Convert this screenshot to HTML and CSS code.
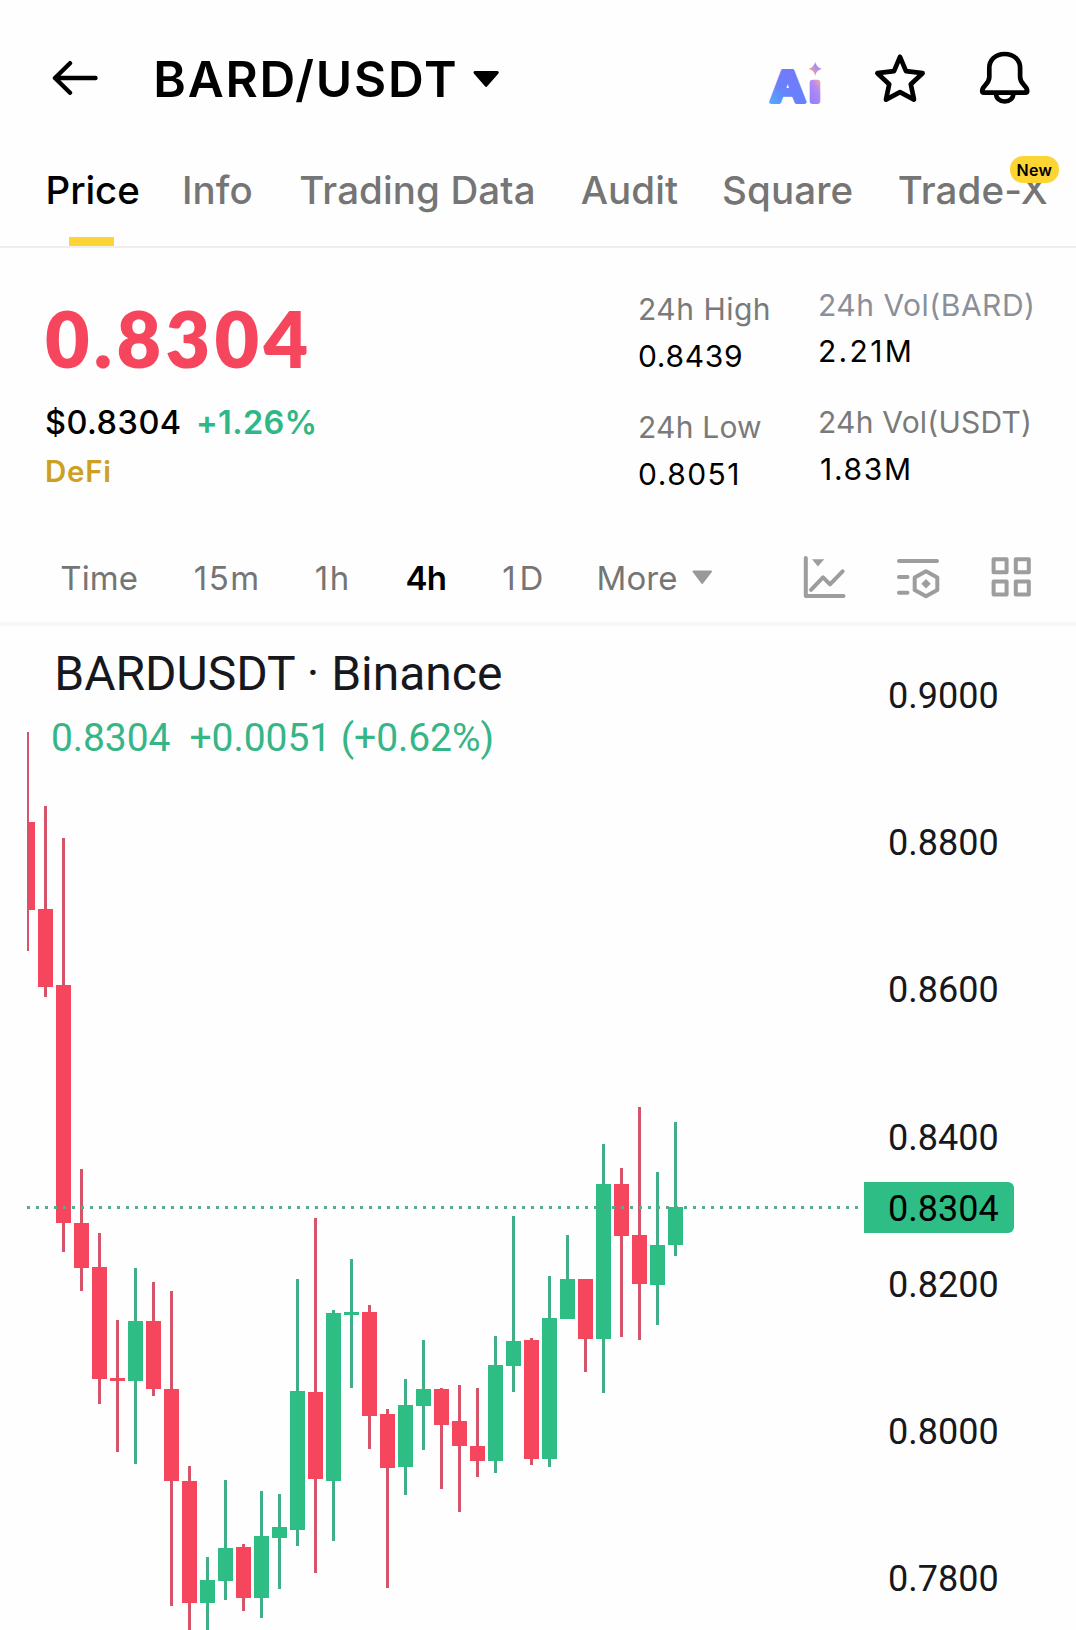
FILE: index.html
```html
<!DOCTYPE html>
<html lang="en">
<head>
<meta charset="utf-8">
<title>BARD/USDT</title>
<link rel="stylesheet" href="styles.css">
</head>
<body>
<header class="header">
  <svg class="back" width="46" height="44" viewBox="52 57 46 44"><path d="M95.500 78H55M70 63.200L55 78L70 92.800"/></svg>
  <h1 class="pair">BARD/USDT</h1>
  <svg class="caret" width="28" height="18" viewBox="472 69 28 18"><path d="M475 71.500H497.300L486.100 84.300Z"/></svg>
  <div class="actions">
    <svg class="assistant" width="56" height="50" viewBox="768 54 56 50">
      <defs>
        <linearGradient id="ga" gradientUnits="userSpaceOnUse" x1="768" y1="104" x2="796" y2="76"><stop offset="0" stop-color="#4fb0ff"/><stop offset=".5" stop-color="#6583fb"/><stop offset="1" stop-color="#7379fb"/></linearGradient>
        <linearGradient id="gi" x1="0" y1="1" x2=".7" y2="0"><stop offset="0" stop-color="#8f7dfb"/><stop offset=".75" stop-color="#b48bf3"/><stop offset="1" stop-color="#e0a0b8"/></linearGradient>
        <linearGradient id="gs" x1="0" y1="1" x2="1" y2="0"><stop offset=".2" stop-color="#f0a58c"/><stop offset=".6" stop-color="#b08bee"/></linearGradient>
      </defs>
      <text class="ai" x="770" y="102" textLength="35.500" lengthAdjust="spacingAndGlyphs">A</text>
      <rect x="809.700" y="79.700" width="10.600" height="24.300" rx="3" fill="url(#gi)"/>
      <path d="M815.200 62Q816.500 67.500 822 68.800Q816.500 70 815.200 75.700Q813.900 70 808.400 68.800Q813.900 67.500 815.200 62Z" fill="url(#gs)"/>
    </svg>
    <svg class="line" width="52" height="52" viewBox="874 53 52 52"><path d="M900 56.800L906 71.200L922.600 73.200L910.800 84.200L914 99.600L900 92.200L886 99.600L889.200 84.200L877.400 73.200L894 71.200Z"/></svg>
    <svg class="line" width="52" height="58" viewBox="979 50 52 58"><path d="M1004.700 54C995 54 989.300 60.500 989.300 68V77C989.300 84.500 982.200 85.500 982.200 91Q982.200 92.700 984 92.700H1025.400Q1027.200 92.700 1027.200 91C1027.200 85.500 1020.100 84.500 1020.100 77V68C1020.100 60.500 1014.400 54 1004.700 54ZM996 93C996 98.500 1000 101.500 1004.700 101.500S1013.400 98.500 1013.400 93"/></svg>
  </div>
</header>

<nav class="tabs">
  <a class="tab active">Price</a>
  <a class="tab">Info</a>
  <a class="tab">Trading Data</a>
  <a class="tab">Audit</a>
  <a class="tab">Square</a>
  <a class="tab">Trade-X<span class="badge">New</span></a>
</nav>

<section class="ticker">
  <div class="quote">
    <div class="last">0.8304</div>
    <div class="sub"><span class="fiat">$0.8304</span><span class="change">+1.26%</span></div>
    <div class="tag">DeFi</div>
  </div>
  <dl class="stats">
    <div><dt>24h High</dt><dd class="high">0.8439</dd></div>
    <div><dt class="snug">24h Low</dt><dd class="low">0.8051</dd></div>
  </dl>
  <dl class="stats volume">
    <div><dt class="cool">24h Vol(BARD)</dt><dd class="base">2.21M</dd></div>
    <div><dt class="snug">24h Vol(USDT)</dt><dd class="counter">1.83M</dd></div>
  </dl>
</section>

<nav class="intervals">
  <div class="ranges">
    <span>Time</span><span class="fig">15m</span><span class="fig">1h</span><span class="on">4h</span><span class="fig day">1D</span><span>More</span>
    <svg width="22" height="16" viewBox="691 570 22 16"><path d="M693.500 571.500H711L702.200 583Z"/></svg>
  </div>
  <div class="tools">
    <svg width="44" height="48" viewBox="803 554 44 48"><path d="M805.800 558V596H843.500M811 589.800L823 577.300L830 584.300L842.600 571.300"/><path class="solid" d="M812 559.300H824.200L818 566.500Z"/></svg>
    <svg width="44" height="48" viewBox="896 554 44 48"><path d="M899 561H937M899 577H907.500M899 592.700H907.500M926 571.300L937.300 577.500V590L926 596.200L914.700 590V577.500Z"/><path class="solid" d="M926 579L930.700 583.700L926 588.400L921.300 583.700Z"/></svg>
    <svg width="42" height="48" viewBox="990 554 42 48"><path d="M993.600 559.300h13v13h-13zM1015.800 559.300h13v13h-13zM993.600 581.500h13v13h-13zM1015.800 581.500h13v13h-13z"/></svg>
  </div>
</nav>

<main class="chart">
  <div class="plot">
    <svg id="candles" width="864" height="1004" viewBox="0 626 864 1004" shape-rendering="crispEdges"></svg>
    <div class="legend">
      <div class="symbol">BARDUSDT · Binance</div>
      <div class="delta"><span>0.8304</span><span>+0.0051 (+0.62%)</span></div>
    </div>
  </div>
  <div class="scale">
    <span>0.9000</span><span>0.8800</span><span>0.8600</span><span>0.8400</span><span>0.8200</span><span>0.8000</span><span>0.7800</span>
    <b class="current">0.8304</b>
  </div>
</main>
<script src="chart.js"></script>
</body>
</html>
```
FILE: styles.css
```css
* { box-sizing: border-box; }
body { margin: 0; width: 1076px; height: 1630px; overflow: hidden; background: #fefefe; color: #000; font-family: Inter, "Liberation Sans", sans-serif; white-space: nowrap; }
svg { display: block; flex: none; }

.header { display: flex; align-items: center; height: 158px; padding: 0 45px 0 52px; }
.back { fill: none; stroke: #000; stroke-width: 4.4; stroke-linecap: round; stroke-linejoin: round; }
.pair { margin: 0 0 0 55.3px; font-size: 49.5px; font-weight: 600; letter-spacing: 1.79px; line-height: 60px; }
.caret { margin-left: 13.6px; stroke: #000; stroke-width: 3; stroke-linejoin: round; }
.actions { display: flex; align-items: center; margin-left: auto; }
.actions svg + svg { margin-left: 50px; }
.actions svg:last-child { margin-left: 53px; }
.line { fill: none; stroke: #000; stroke-width: 4.7; stroke-linejoin: round; stroke-linecap: round; }
.assistant { overflow: visible; }
.ai { font-size: 42px; font-weight: 700; fill: url(#ga); stroke: url(#ga); stroke-width: 3.8; stroke-linejoin: round; }

.tabs { display: grid; grid-template-columns: 136.3px 117.4px 281.4px 141.4px 175.7px auto; align-items: start; justify-content: start; height: 90px; padding-left: 45.6px; border-bottom: 2px solid #eee; font-size: 38.5px; font-weight: 500; line-height: 65px; letter-spacing: .1px; color: #757575; }
.tab { position: relative; justify-self: start; height: 88px; }
.tab.active { color: #000; letter-spacing: -.1px; }
.tab.active::after { content: ""; position: absolute; left: 23.400px; bottom: 0; width: 45px; height: 9px; background: #fcd535; }
.badge { position: absolute; left: 112.200px; top: -2px; width: 49px; height: 27px; border-radius: 13px; background: #fcd535; color: #000; font-size: 16px; font-weight: 600; letter-spacing: .42px; line-height: 28px; text-align: center; }

.ticker { display: flex; height: 286px; }
.quote { width: 638px; padding: 40px 0 0 44.900px; }
.last { height: 103px; line-height: 100px; font-family: Lato, Inter, sans-serif; font-size: 77px; font-weight: 800; letter-spacing: 4.29px; color: #f6465d; }
.sub { display: flex; height: 63px; line-height: 64px; font-size: 32.5px; font-weight: 500; letter-spacing: .5px; }
.fiat { width: 151px; }
.change { font-weight: 600; letter-spacing: .34px; color: #2fb785; }
.tag { margin-top: -6px; line-height: 46px; font-size: 29.5px; font-weight: 600; letter-spacing: .77px; color: #cda021; }
.stats { margin: 0; width: 180px; padding-top: 38px; font-size: 30px; line-height: 46px; letter-spacing: .5px; }
.stats.volume { padding-top: 34px; }
.stats > div { height: 118px; }
.stats.volume > div { height: 117px; }
dt { color: #7a7a7a; }
dt.cool { color: #8b8f99; }
dt.snug { letter-spacing: .22px; }
dd { margin: 0; padding-top: 1px; }
.volume dd { padding-top: 0; }
.high { letter-spacing: .7px; }
.low { letter-spacing: 1.5px; }
.base { letter-spacing: 2.3px; }
.volume .counter { padding: 1px 0 0 2px; letter-spacing: 1.7px; }

.intervals { display: flex; align-items: center; height: 92px; padding: 0 44px 0 60.3px; border-bottom: 4px solid #f6f6f6; }
.ranges { display: grid; grid-template-columns: 133.400px 121px 90.700px 96.800px 94.300px 95px auto; align-items: center; font-size: 33px; line-height: 40px; color: #757575; letter-spacing: .1px; }
.ranges .fig { letter-spacing: 1.6px; }
.ranges .day { letter-spacing: 4px; }
.ranges .on { color: #000; font-weight: 600; letter-spacing: -.68px; }
.ranges svg { fill: #999; stroke: #999; stroke-width: 2; stroke-linejoin: round; }
.tools { display: flex; margin-left: auto; }
.tools svg + svg { margin-left: 49px; }
.tools svg:last-child { margin-left: 50px; }
.tools svg { fill: none; stroke: #9d9d9d; stroke-width: 4; stroke-linecap: round; stroke-linejoin: round; }
.tools .solid { fill: #9d9d9d; stroke: none; }

.chart { display: flex; height: 1004px; overflow: hidden; font-family: Roboto, "Liberation Sans", sans-serif; color: #16181d; }
.plot { position: relative; width: 864px; }
.legend { position: absolute; left: 50.900px; top: 18px; }
.symbol { padding-left: 3.400px; font-size: 48px; line-height: 60px; }
.delta { display: flex; margin-top: 4px; font-size: 39px; line-height: 60px; letter-spacing: -.05px; color: #36b587; }
.delta span:first-child { width: 138.600px; }
.scale { position: relative; width: 212px; font-size: 36px; }
.scale span { display: block; height: 147.200px; line-height: 147.200px; padding-left: 24px; }
.scale span:first-child { margin-top: -3px; }
.current { position: absolute; left: 0; top: 556px; width: 150px; height: 51px; padding-left: 24px; line-height: 54px; border-radius: 0 6px 6px 0; background: #2ebd85; color: #000; font-weight: 400; }

.up { fill: #2ebd85; }
.down { fill: #f6465d; }
.wick.up { fill: #42ae88; }
.wick.down { fill: #d5546a; }
.last-price { stroke: #55ac8e; stroke-width: 3; stroke-dasharray: 3 6; }
```
FILE: chart.js
```js
// One candle per row: direction, wick top, wick bottom, body top, body bottom.
const candles = [
  ['down', 732, 951, 822, 910], ['down', 806, 997, 909, 987], ['down', 838, 1252, 985, 1223],
  ['down', 1169, 1291, 1223, 1268], ['down', 1233, 1404, 1267, 1379], ['down', 1320, 1452, 1378, 1381],
  ['up', 1268, 1464, 1321, 1381], ['down', 1282, 1396, 1321, 1389], ['down', 1291, 1606, 1389, 1481],
  ['down', 1466, 1640, 1481, 1603], ['up', 1557, 1640, 1580, 1603], ['up', 1480, 1600, 1548, 1581],
  ['down', 1544, 1611, 1547, 1598], ['up', 1491, 1618, 1536, 1598], ['up', 1494, 1589, 1527, 1538],
  ['up', 1279, 1546, 1391, 1530], ['down', 1218, 1573, 1392, 1479], ['up', 1310, 1541, 1313, 1481],
  ['up', 1259, 1388, 1312, 1315], ['down', 1305, 1449, 1312, 1416], ['down', 1409, 1588, 1414, 1468],
  ['up', 1379, 1495, 1405, 1467], ['up', 1340, 1450, 1389, 1406], ['down', 1388, 1489, 1389, 1425],
  ['down', 1385, 1512, 1421, 1446], ['down', 1388, 1477, 1446, 1461], ['up', 1336, 1473, 1365, 1461],
  ['up', 1216, 1392, 1341, 1366], ['down', 1338, 1465, 1340, 1459], ['up', 1276, 1467, 1318, 1459],
  ['up', 1235, 1319, 1279, 1319], ['down', 1279, 1372, 1279, 1339], ['up', 1144, 1393, 1184, 1339],
  ['down', 1168, 1337, 1184, 1236], ['down', 1107, 1340, 1235, 1284], ['up', 1172, 1325, 1245, 1285],
  ['up', 1122, 1256, 1207, 1245]
];
const left = 27;
const rect = (cls, x, w, y1, y2) => {
  const start = Math.max(x, left);
  return `<rect class="${cls}" x="${start}" y="${y1}" width="${x + w - start}" height="${y2 - y1}"/>`;
};
document.getElementById('candles').innerHTML = candles.map(([dir, high, low, top, bottom], i) => {
  const x = 20 + 18 * i;
  return rect('wick ' + dir, x + 6, 3, high, low) +
    rect(dir, i ? x : 29, i ? 15 : 6, top, bottom);
}).join('') + '<line class="last-price" x1="27" x2="860" y1="1207.5" y2="1207.5"/>';
```
